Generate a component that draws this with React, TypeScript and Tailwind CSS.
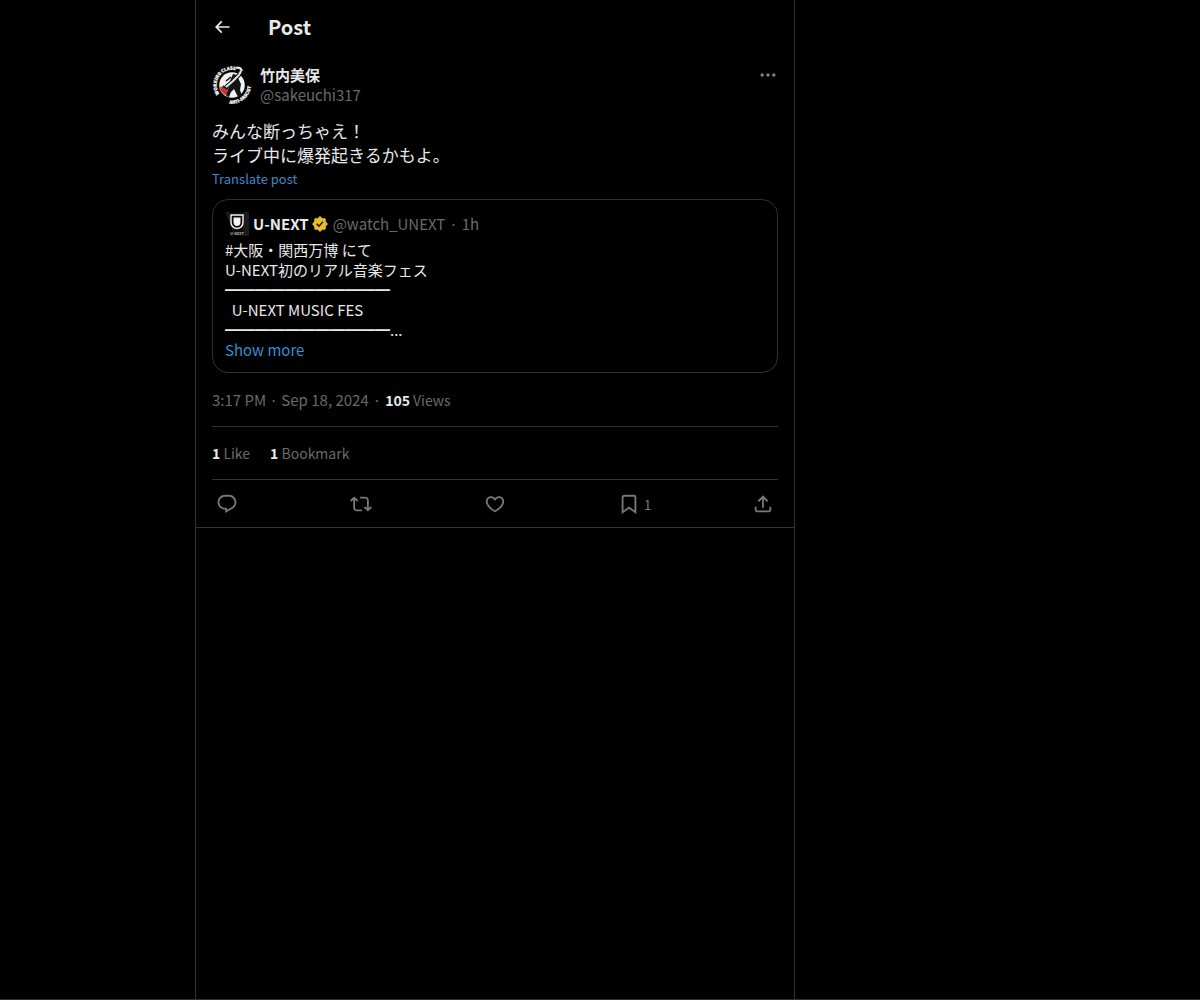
import React from 'react'

const ICONS = {
  back: 'M7.414 13l5.043 5.04-1.414 1.42L3.586 12l7.457-7.46 1.414 1.42L7.414 11H21v2H7.414z',
  more: 'M3 12c0-1.1.9-2 2-2s2 .9 2 2-.9 2-2 2-2-.9-2-2zm9 2c1.1 0 2-.9 2-2s-.9-2-2-2-2 .9-2 2 .9 2 2 2zm7 0c1.1 0 2-.9 2-2s-.9-2-2-2-2 .9-2 2 .9 2 2 2z',
  reply: 'M1.751 10c0-4.42 3.584-8 8.005-8h4.366c4.49 0 8.129 3.64 8.129 8.13 0 2.96-1.607 5.68-4.196 7.11l-8.054 4.46v-3.69h-.067c-4.49.1-8.183-3.51-8.183-8.01zm8.005-6c-3.317 0-6.005 2.69-6.005 6 0 3.37 2.77 6.08 6.138 6.01l.351-.01h1.761v2.3l5.087-2.81c1.951-1.08 3.163-3.13 3.163-5.36 0-3.39-2.744-6.13-6.129-6.13H9.756z',
  repost: 'M4.5 3.88l4.432 4.14-1.364 1.46L5.5 7.55V16c0 1.1.896 2 2 2H13v2H7.5c-2.209 0-4-1.79-4-4V7.55L1.432 9.48.068 8.02 4.5 3.88zM16.5 6H11V4h5.5c2.209 0 4 1.79 4 4v8.45l2.068-1.93 1.364 1.46-4.432 4.14-4.432-4.14 1.364-1.46 2.068 1.93V8c0-1.1-.896-2-2-2z',
  like: 'M16.697 5.5c-1.222-.06-2.679.51-3.89 2.16l-.805 1.09-.806-1.09C9.984 6.01 8.526 5.44 7.304 5.5c-1.243.07-2.349.78-2.91 1.91-.552 1.12-.633 2.78.479 4.82 1.074 1.97 3.257 4.27 7.129 6.61 3.87-2.34 6.052-4.64 7.126-6.61 1.111-2.04 1.03-3.7.477-4.82-.561-1.13-1.666-1.84-2.908-1.91zm4.187 7.69c-1.351 2.48-4.001 5.12-8.379 7.67l-.503.3-.504-.3c-4.379-2.55-7.029-5.19-8.382-7.67-1.36-2.5-1.41-4.86-.514-6.67.887-1.79 2.647-2.91 4.601-3.01 1.651-.09 3.368.56 4.798 2.01 1.429-1.45 3.146-2.1 4.796-2.01 1.954.1 3.714 1.22 4.601 3.01.896 1.81.846 4.17-.514 6.67z',
  bookmark: 'M4 4.5C4 3.12 5.119 2 6.5 2h11C18.881 2 20 3.12 20 4.5v18.44l-8-5.71-8 5.71V4.5zM6.5 4c-.276 0-.5.22-.5.5v14.56l6-4.29 6 4.29V4.5c0-.28-.224-.5-.5-.5h-11z',
  share: 'M12 2.59l5.7 5.7-1.41 1.42L13 6.41V16h-2V6.41l-3.3 3.3-1.41-1.42L12 2.59zM21 15l-.02 3.51c0 1.38-1.12 2.49-2.5 2.49H5.5C4.11 21 3 19.88 3 18.5V15h2v3.5c0 .28.22.5.5.5h12.98c.28 0 .5-.22.5-.5L19 15h2z',
}

type IconName = keyof typeof ICONS

const actions: { id: IconName; label: string; count?: number }[] = [
  { id: 'reply', label: 'Reply' },
  { id: 'repost', label: 'Repost' },
  { id: 'like', label: 'Like' },
  { id: 'bookmark', label: 'Bookmark', count: 1 },
  { id: 'share', label: 'Share post' },
]

export default function App() {
  return (
    <div className="min-h-screen flex bg-black border-b border-[#2f2f2f] text-[#e7e9ea] text-[15px] leading-5 font-['Noto_Sans_CJK_JP',sans-serif]">
      <div className="w-[195px] shrink-0" />
      <main className="grow max-w-[600px] border-x border-[#333333]">
        <header className="flex items-center h-[54px] px-4">
          <button aria-label="Back" className="w-14 shrink-0"><Icon name="back" className="size-5" /></button>
          <h1 className="text-xl font-bold">Post</h1>
        </header>
        <Post />
      </main>
    </div>
  )
}

function Post() {
  return (
    <article className="px-4 pt-[11px] border-b border-[#333333]">
      <div className="flex items-start gap-2">
        <Avatar />
        <div className="grow min-w-0">
          <p className="font-bold">竹内美保</p>
          <a href="#profile" className="text-[#6a6a6c]">@sakeuchi317</a>
        </div>
        <button aria-label="More" className="text-[#808080]"><Icon name="more" className="size-5" /></button>
      </div>

      <p className="mt-[14px] text-[17px] leading-6">みんな断っちゃえ！<br />ライブ中に爆発起きるかもよ。</p>
      <button className="block mt-1 text-[13px] leading-4 text-[#3d8ac4]">Translate post</button>

      <Quote />

      <p className="mt-[17px] mb-4 flex gap-1 text-[#6a6a6c]">
        <a href="#post">3:17 PM · Sep 18, 2024</a>
        <span>·</span>
        <span className="text-sm leading-5"><b className="text-[#e7e9ea]">105</b> Views</span>
      </p>

      <div className="flex gap-5 py-4 border-y border-[#333333] text-sm text-[#6a6a6c]">
        <a href="#likes"><b className="text-[#e7e9ea]">1</b> Like</a>
        <a href="#bookmarks"><b className="text-[#e7e9ea]">1</b> Bookmark</a>
      </div>

      <div className="flex items-center h-[47px] px-1 text-[#787878]">
        {actions.map(a => (
          <button key={a.id} aria-label={a.label} className="flex items-center gap-1 grow basis-0 last:grow-0 last:basis-auto">
            <Icon name={a.id} className="size-[22px]" />
            {a.count && <span className="pt-0.5 text-[13px]">{a.count}</span>}
          </button>
        ))}
      </div>
    </article>
  )
}

function Quote() {
  return (
    <div className="mt-3 p-3 rounded-2xl border border-[#2f2f2f]">
      <div className="flex items-center gap-1 h-6">
        <QuoteLogo />
        <span className="flex items-center gap-0.5 font-bold">
          U-NEXT
          <VerifiedBadge />
        </span>
        <span className="text-[#6a6a6c]">@watch_UNEXT</span>
        <span className="text-[#6a6a6c]">·</span>
        <span className="text-[#6a6a6c]">1h</span>
      </div>
      <p className="mt-1 whitespace-pre-wrap">
        {'#大阪・関西万博 にて\nU-NEXT初のリアル音楽フェス\n━━━━━━━━━━━\n  U-NEXT MUSIC FES\n━━━━━━━━━━━...'}
      </p>
      <button className="block text-[#2f8fd6]">Show more</button>
    </div>
  )
}

function Icon({ name, className }: { name: IconName; className: string }) {
  return (
    <svg viewBox="0 0 24 24" fill="currentColor" className={`block shrink-0 ${className}`} aria-hidden="true">
      <path d={ICONS[name]} />
    </svg>
  )
}

function VerifiedBadge() {
  return (
    <svg viewBox="0 0 22 22" className="size-[18px] shrink-0" role="img" aria-label="Verified">
      <path fill="#e8bd2e" d="M12.05 2.056c-.568-.608-1.532-.608-2.1 0l-1.393 1.49c-.284.303-.685.47-1.1.455L5.42 3.932c-.832-.028-1.514.654-1.486 1.486l.069 2.039c.014.415-.152.816-.456 1.1l-1.49 1.392c-.608.568-.608 1.533 0 2.101l1.49 1.393c.304.284.47.684.456 1.1l-.07 2.038c-.027.832.655 1.514 1.487 1.486l2.038-.069c.415-.014.816.152 1.1.455l1.392 1.49c.569.609 1.533.609 2.102 0l1.393-1.49c.283-.303.684-.47 1.099-.455l2.038.069c.832.028 1.515-.654 1.486-1.486L18 14.542c-.015-.415.152-.815.455-1.099l1.49-1.393c.608-.568.608-1.533 0-2.101l-1.49-1.393c-.303-.283-.47-.684-.455-1.1l.068-2.038c.029-.832-.654-1.514-1.486-1.486l-2.038.07c-.415.013-.816-.153-1.1-.456z" />
      <path fill="none" stroke="#1a1403" strokeWidth="1.8" d="M6.9 10.8l2.8 2.8 5-5.5" />
    </svg>
  )
}

// round badge: lettering ring around a white disc with a figure swinging a hammer
function Avatar() {
  return (
    <svg viewBox="0 0 40 40" className="size-10 shrink-0" role="img" aria-label="竹内美保">
      <defs>
        <path id="ring-top" d="M7.4 28.8A15.4 15.4 0 0 1 27.7 6.7" />
        <path id="ring-bottom" d="M17.4 38.600A18.800 18.800 0 0 0 37.700 13.600" />
      </defs>
      <circle cx="20" cy="20" r="20" fill="#050505" />
      <circle cx="20" cy="20" r="12.8" fill="#f2f2f2" />
      <g fill="#f2f2f2" stroke="#f2f2f2" strokeWidth=".3" fontSize="4.4" fontWeight="900">
        <text><textPath href="#ring-top">WORKING</textPath></text>
        <text><textPath href="#ring-top" startOffset="22.8">CLASS</textPath></text>
        <text><textPath href="#ring-bottom">ANTI-</textPath></text>
        <text><textPath href="#ring-bottom" startOffset="12.6">FASCIST</textPath></text>
      </g>
      <path fill="#c8372f" d="M8 22l4-1 3 4 1 4-3 1c-3-2-5-5-5-8z" />
      <path fill="#141414" d="M21 9l4 1 2 5 2 4-1 6 2 6-4 1-4-8-3 3-2 5-3-1 2-7 3-5-1-3z" />
      <path fill="none" stroke="#141414" strokeWidth="1.6" d="M11 21l4 3 3-6M14 16l5-4" />
      <path fill="none" stroke="#141414" strokeWidth="4" d="M14 22l7-6 6-6 2-4" />
      <path fill="none" stroke="#e8e8e8" strokeWidth="2" d="M14 22l7-6 6-6 2-4M24 3c3-1 5 0 6 3" />
    </svg>
  )
}

function QuoteLogo() {
  return (
    <svg viewBox="0 0 24 24" className="size-6 shrink-0" role="img" aria-label="U-NEXT">
      <path fill="#1c1c1c" d="M0 0h24v24H10z" />
      <path fill="#0b0b0b" d="M4 0h14v24H10z" />
      <path fill="none" stroke="#f4f4f4" strokeWidth="1.4" d="M6 3h12v7c0 4-2 6-6 6.500-4-.5-6-2.500-6-6.500z" />
      <path fill="#f4f4f4" d="M8.500 5.500h7V10c0 2.600-1.300 3.800-3.500 4-2.200-.2-3.500-1.400-3.500-4z" />
      <text x="12" y="22.500" textAnchor="middle" fontSize="3.600" fontWeight="700" fill="#bdbdbd">U-NEXT</text>
    </svg>
  )
}
